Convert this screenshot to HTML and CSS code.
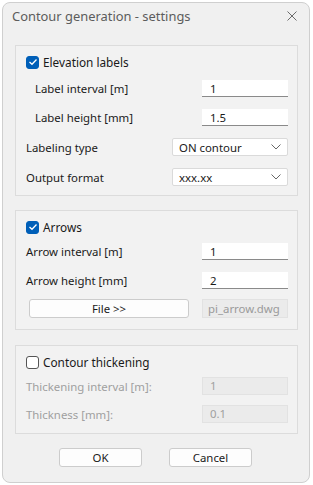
FILE: index.html
```html
<!DOCTYPE html>
<html lang="en">
<head>
    <meta charset="UTF-8">
    <title>Contour generation - settings</title>
    <link rel="stylesheet" href="styles.css">
</head>
<body>

<div class="window">
    <div class="titlebar">
        <span class="title">Contour generation - settings</span>
        <svg class="close" width="10" height="10" viewBox="0 0 10 10">
            <path d="M0.5 0.5 L9.5 9.5 M9.5 0.5 L0.5 9.5" stroke="#6b6b6b" stroke-width="1" fill="none"/>
        </svg>
    </div>

    <div class="content">
        <!-- Elevation labels -->
        <div class="group group-labels">
            <div class="check-row">
                <span class="checkbox checked">
                    <svg width="10" height="8" viewBox="0 0 10 8"><path d="M1.5 4 L4 6.3 L8.5 1.5" stroke="#fff" stroke-width="1.3" fill="none"/></svg>
                </span>
                <span>Elevation labels</span>
            </div>
            <div class="row row-in indent">
                <span>Label interval [m]</span>
                <div class="input">1</div>
            </div>
            <div class="row row-in indent">
                <span>Label height [mm]</span>
                <div class="input">1.5</div>
            </div>
            <div class="row row-sel">
                <span>Labeling type</span>
                <div class="select">ON contour
                    <svg width="10" height="6" viewBox="0 0 10 6"><path d="M0.5 0.5 L5 5 L9.5 0.5" stroke="#666" fill="none"/></svg>
                </div>
            </div>
            <div class="row row-sel">
                <span>Output format</span>
                <div class="select">xxx.xx
                    <svg width="10" height="6" viewBox="0 0 10 6"><path d="M0.5 0.5 L5 5 L9.5 0.5" stroke="#666" fill="none"/></svg>
                </div>
            </div>
        </div>

        <!-- Arrows -->
        <div class="group group-arrows">
            <div class="check-row">
                <span class="checkbox checked">
                    <svg width="10" height="8" viewBox="0 0 10 8"><path d="M1.5 4 L4 6.3 L8.5 1.5" stroke="#fff" stroke-width="1.3" fill="none"/></svg>
                </span>
                <span>Arrows</span>
            </div>
            <div class="row row-a1">
                <span>Arrow interval [m]</span>
                <div class="input">1</div>
            </div>
            <div class="row row-a2">
                <span>Arrow height [mm]</span>
                <div class="input">2</div>
            </div>
            <div class="row row-file">
                <button type="button" class="btn file-btn">File &gt;&gt;</button>
                <div class="input disabled">pi_arrow.dwg</div>
            </div>
        </div>

        <!-- Contour thickening -->
        <div class="group group-thick">
            <div class="check-row">
                <span class="checkbox"></span>
                <span>Contour thickening</span>
            </div>
            <div class="row row-t1 off">
                <span>Thickening interval [m]:</span>
                <div class="input disabled">1</div>
            </div>
            <div class="row row-t2 off">
                <span>Thickness [mm]:</span>
                <div class="input disabled">0.1</div>
            </div>
        </div>

        <div class="buttons">
            <button type="button" class="btn">OK</button>
            <button type="button" class="btn">Cancel</button>
        </div>
    </div>
</div>

</body>
</html>
```

FILE: styles.css
```css
body {
    margin: 0;
    background-color: #ffffff;
    font-family: "Noto Sans", "Open Sans", sans-serif;
    font-size: 11.4px;
    color: #1a1a1a;
}

.window {
    margin: 2px 0 0 2px;
    width: 306px;
    height: 479px;
    border: 1px solid #cfcfcf;
    border-radius: 8px;
    background-color: #f0f0f0;
    box-sizing: content-box;
}

.titlebar {
    height: 25px;
    display: flex;
    align-items: center;
    justify-content: space-between;
    padding: 0 12px 0 9px;
}

.title {
    font-size: 12.9px;
    color: #5c5c5c;
}

.content {
    padding: 17px 11px 0 12px;
}

.group {
    border: 1px solid #dcdcdc;
    padding: 8px 9px 0 10px;
    background-color: #f2f2f2;
}

.group-labels {
    height: 141px;
}

.group-arrows {
    margin-top: 14px;
    height: 110px;
}

.group-thick {
    margin-top: 15px;
    height: 79px;
}

.check-row {
    display: flex;
    align-items: center;
    height: 16px;
    font-size: 11.8px;
}

.checkbox {
    width: 13px;
    height: 13px;
    border: 1px solid #555;
    border-radius: 3px;
    box-sizing: border-box;
    margin-right: 4px;
    display: flex;
    align-items: center;
    justify-content: center;
    background: #fff;
}

.checkbox.checked {
    background-color: #005fb8;
    border-color: #005fb8;
}

.row {
    display: flex;
    align-items: center;
    justify-content: space-between;
}

.indent {
    padding-left: 9px;
}

.row-in {
    height: 17px;
    margin-top: 10px;
}

.row-in + .row-in {
    margin-top: 12px;
}

.row-sel {
    height: 18px;
    margin-top: 12px;
}

.row-sel + .row-sel {
    margin-top: 12px;
}

.input {
    width: 86px;
    height: 17px;
    box-sizing: border-box;
    background: #fff;
    border-bottom: 1px solid #8a8a8a;
    padding-left: 8px;
    line-height: 17px;
}

.input.disabled {
    background: #ebebeb;
    border: 1px solid #e2e2e2;
    color: #a0a0a0;
    height: 18px;
    line-height: 16px;
    padding-left: 7px;
}

.select {
    width: 116px;
    height: 18px;
    box-sizing: border-box;
    background: #fff;
    border: 1px solid #dadada;
    border-radius: 2px;
    padding: 0 6px 0 6px;
    display: flex;
    align-items: center;
    justify-content: space-between;
}

.row-a1 {
    height: 17px;
    margin-top: 8px;
}

.row-a2 {
    height: 17px;
    margin-top: 12px;
}

.row-file {
    height: 19px;
    margin-top: 10px;
    padding-left: 3px;
}

.row-file .input.disabled {
    height: 19px;
    line-height: 17px;
    padding-left: 5px;
    color: #9a9a9a;
}

.btn {
    font-family: "Noto Sans", "Open Sans", sans-serif;
    font-size: 11.4px;
    color: #1a1a1a;
    background: #fdfdfd;
    border: 1px solid #cccccc;
    border-radius: 3px;
    height: 19px;
    padding: 0;
    line-height: 17px;
}

.file-btn {
    width: 160px;
}

.row-t1 {
    height: 18px;
    margin-top: 7px;
}

.row-t2 {
    height: 18px;
    margin-top: 10px;
}

.off {
    color: #a0a0a0;
}

.buttons {
    display: flex;
    justify-content: center;
    gap: 27px;
    margin-top: 14px;
    padding-right: 2px;
}

.buttons .btn {
    width: 83px;
}
```
